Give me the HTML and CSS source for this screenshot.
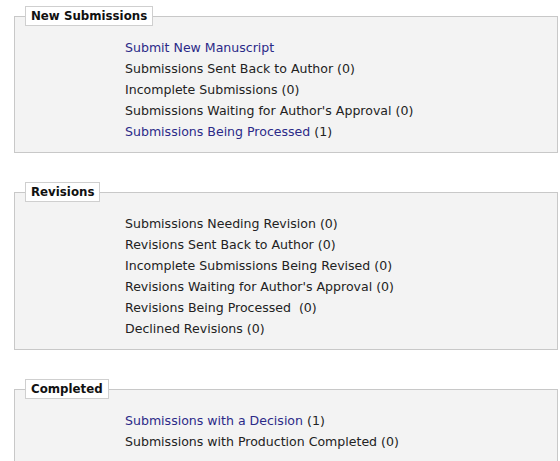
FILE: index.html
```html
<!DOCTYPE html>
<html>
<head>
<meta charset="utf-8">
<link rel="stylesheet" href="styles.css">
</head>
<body>
<fieldset class="group">
  <legend class="group-title">New Submissions</legend>
  <ul class="items">
    <li><a class="link" href="#">Submit New Manuscript</a></li>
    <li>Submissions Sent Back to Author (0)</li>
    <li>Incomplete Submissions (0)</li>
    <li>Submissions Waiting for Author's Approval (0)</li>
    <li><a class="link" href="#">Submissions Being Processed</a> (1)</li>
  </ul>
</fieldset>
<fieldset class="group">
  <legend class="group-title">Revisions</legend>
  <ul class="items">
    <li>Submissions Needing Revision (0)</li>
    <li>Revisions Sent Back to Author (0)</li>
    <li>Incomplete Submissions Being Revised (0)</li>
    <li>Revisions Waiting for Author's Approval (0)</li>
    <li>Revisions Being Processed &nbsp;(0)</li>
    <li>Declined Revisions (0)</li>
  </ul>
</fieldset>
<fieldset class="group">
  <legend class="group-title">Completed</legend>
  <ul class="items">
    <li><a class="link" href="#">Submissions with a Decision</a> (1)</li>
    <li>Submissions with Production Completed (0)</li>
  </ul>
</fieldset>
</body>
</html>
```
FILE: styles.css
```css
html, body {
  margin: 0;
  background: #fff;
}
body {
  padding-top: 6px;
  font-family: "DejaVu Sans", Verdana, sans-serif;
  font-size: 12.55px;
  color: #222;
}
.group {
  margin: 0 2px 29px 14px;
  border: 1px solid #c8c8c8;
  background: #f3f3f3;
  padding: 11px 10px 10px 10px;
}
.group-title {
  padding: 1px 5px;
  border: 1px solid #cfcfcf;
  background: #fff;
  font-weight: bold;
  font-size: 11.8px;
  line-height: 16px;
  color: #111;
}
.items {
  list-style: none;
  margin: 0 0 0 100px;
  padding: 0;
}
.items li {
  line-height: 21px;
  white-space: nowrap;
}
.link {
  color: #2b2a88;
  text-decoration: none;
}
```
